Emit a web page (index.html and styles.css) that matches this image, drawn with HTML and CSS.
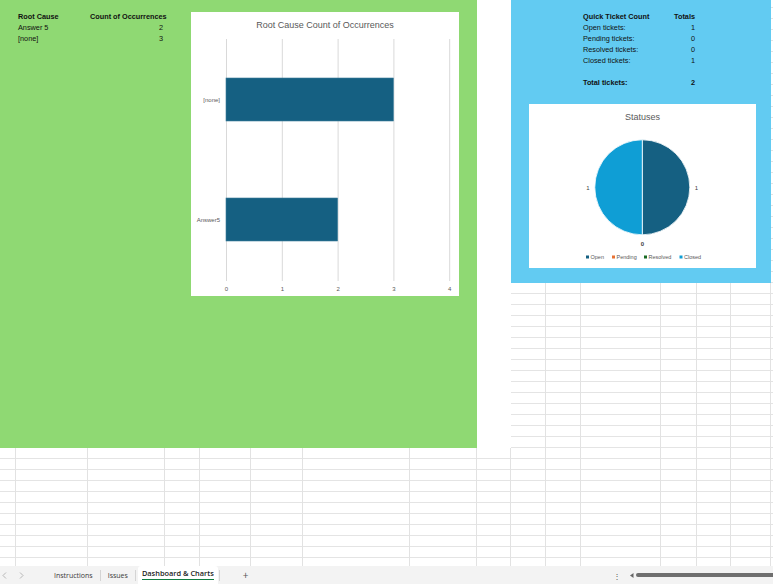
FILE: index.html
```html
<!DOCTYPE html>
<html lang="en">
<head>
    <meta charset="UTF-8">
    <meta name="viewport" content="width=device-width, initial-scale=1.0">
    <title>Ticket Tracker - Dashboard &amp; Charts</title>
    <link rel="stylesheet" href="styles.css">
</head>
<body>

    <div class="workbook">
        <div class="sheet">
            <!-- filled cell ranges -->
            <div class="fill fill-green"></div>
            <div class="fill fill-gap"></div>
            <div class="fill fill-blue"></div>

            <!-- root cause summary -->
            <div class="cell b c2 r2">Root Cause</div>
            <div class="cell b num c3 r2">Count of Occurrences</div>
            <div class="cell c2 r3">Answer 5</div>
            <div class="cell num c3 r3">2</div>
            <div class="cell c2 r4">[none]</div>
            <div class="cell num c3 r4">3</div>

            <!-- quick ticket count -->
            <div class="cell b c12 r2">Quick Ticket Count</div>
            <div class="cell b num c13 r2">Totals</div>
            <div class="cell c12 r3">Open tickets:</div>
            <div class="cell num c13 r3">1</div>
            <div class="cell c12 r4">Pending tickets:</div>
            <div class="cell num c13 r4">0</div>
            <div class="cell c12 r5">Resolved tickets:</div>
            <div class="cell num c13 r5">0</div>
            <div class="cell c12 r6">Closed tickets:</div>
            <div class="cell num c13 r6">1</div>
            <div class="cell b c12 r8">Total tickets:</div>
            <div class="cell b num c13 r8">2</div>

            <!-- bar chart -->
            <div class="chart chart-bar">
                <svg width="268" height="284" viewBox="0 0 268 284">
                    <text class="chart-title" x="134" y="16">Root Cause Count of Occurrences</text>
                    <g class="grid">
                        <line x1="35.5" y1="27" x2="35.5" y2="269"/>
                        <line x1="91.3" y1="27" x2="91.3" y2="269"/>
                        <line x1="147.1" y1="27" x2="147.1" y2="269"/>
                        <line x1="202.9" y1="27" x2="202.9" y2="269"/>
                        <line x1="258.7" y1="27" x2="258.7" y2="269"/>
                    </g>
                    <rect class="bar" x="35" y="66" width="167.4" height="43"/>
                    <rect class="bar" x="35" y="186" width="111.6" height="43"/>
                    <g class="axis-cat">
                        <text x="29" y="89.5">[none]</text>
                        <text x="29" y="209.5">Answer5</text>
                    </g>
                    <g class="axis-val">
                        <text x="35.5" y="278.5">0</text>
                        <text x="91.3" y="278.5">1</text>
                        <text x="147.1" y="278.5">2</text>
                        <text x="202.9" y="278.5">3</text>
                        <text x="258.7" y="278.5">4</text>
                    </g>
                </svg>
            </div>

            <!-- status pie -->
            <div class="chart chart-pie">
                <svg width="227" height="164" viewBox="0 0 227 164">
                    <text class="chart-title" x="113.5" y="16">Statuses</text>
                    <path class="slice" fill="#156082" d="M113.3 35.8 A47.5 47.5 0 0 1 113.3 130.8 Z"/>
                    <path class="slice" fill="#0f9ed5" d="M113.3 130.8 A47.5 47.5 0 0 1 113.3 35.8 Z"/>
                    <g class="pie-label">
                        <text x="59" y="85.5">1</text>
                        <text x="167.5" y="85.5">1</text>
                        <text class="zero" x="113.3" y="141.5">0</text>
                    </g>
                    <g class="legend">
                        <rect x="57" y="151.5" width="3" height="3" fill="#156082"/>
                        <text x="61.5" y="155">Open</text>
                        <rect x="83" y="151.5" width="3" height="3" fill="#e97132"/>
                        <text x="87.5" y="155">Pending</text>
                        <rect x="115" y="151.5" width="3" height="3" fill="#196b24"/>
                        <text x="119.5" y="155">Resolved</text>
                        <rect x="150.5" y="151.5" width="3" height="3" fill="#0f9ed5"/>
                        <text x="155" y="155">Closed</text>
                    </g>
                </svg>
            </div>
        </div>

        <div class="tabbar">
            <div class="nav">
                <svg width="5" height="7" viewBox="0 0 5 7"><path d="M4 0.5 L1 3.5 L4 6.5"/></svg>
                <svg width="5" height="7" viewBox="0 0 5 7"><path d="M1 0.5 L4 3.5 L1 6.5"/></svg>
            </div>
            <div class="tab">Instructions</div>
            <div class="tab-sep"></div>
            <div class="tab">Issues</div>
            <div class="tab-sep"></div>
            <div class="tab active"><span>Dashboard &amp; Charts</span></div>
            <div class="tab-sep"></div>
            <div class="add-sheet">+</div>

            <div class="scroll">
                <span class="more">&#8942;</span>
                <svg class="scroll-left" width="4" height="5" viewBox="0 0 4 5"><path d="M3.5 0 L0 2.5 L3.5 5 Z"/></svg>
                <div class="thumb"></div>
            </div>
        </div>
    </div>

</body>
</html>
```

FILE: styles.css
```css
* {
    box-sizing: border-box;
}
body {
    margin: 0;
    background: #ffffff;
    font-family: "Liberation Sans", Arial, sans-serif;
    color: #000;
}
.workbook {
    width: 773px;
    height: 584px;
    overflow: hidden;
}

/* sheet grid: column widths follow the workbook's columns */
.sheet {
    position: relative;
    height: 566px;
    overflow: hidden;
    display: grid;
    grid-template-columns: 16px 72px 77px 35px 51px 52px 107px 67px 34px 35px 35px 80px 36px 34px 40px 2px;
    grid-template-rows: 8px repeat(51, 11px);
    background-color: #ffffff;
    background-image:
        linear-gradient(to right,
            transparent 15px, #e2e2e2 15px 16px,
            transparent 16px 87px, #e2e2e2 87px 88px,
            transparent 88px 164px, #e2e2e2 164px 165px,
            transparent 165px 199px, #e2e2e2 199px 200px,
            transparent 200px 250px, #e2e2e2 250px 251px,
            transparent 251px 302px, #e2e2e2 302px 303px,
            transparent 303px 409px, #e2e2e2 409px 410px,
            transparent 410px 476px, #e2e2e2 476px 477px,
            transparent 477px 510px, #e2e2e2 510px 511px,
            transparent 511px 545px, #e2e2e2 545px 546px,
            transparent 546px 580px, #e2e2e2 580px 581px,
            transparent 581px 660px, #e2e2e2 660px 661px,
            transparent 661px 696px, #e2e2e2 696px 697px,
            transparent 697px 730px, #e2e2e2 730px 731px,
            transparent 731px 770px, #e2e2e2 770px 771px,
            transparent 771px),
        linear-gradient(to bottom, transparent 10px, #e4e4e4 10px);
    background-size: 100% 100%, 100% 11px;
    background-position: 0 0, 0 8px;
    background-repeat: no-repeat, repeat-y;
}

.fill {
    grid-row: 1 / 42;
}
.fill-green {
    grid-column: 1 / 9;
    background: #8fd973;
}
.fill-gap {
    grid-column: 9 / 10;
    background: #ffffff;
}
.fill-blue {
    grid-column: 10 / 16;
    grid-row: 1 / 27;
    background: #62cbf2;
}

/* cells sit on the bottom edge of their row, as in the sheet */
.cell {
    align-self: end;
    padding: 0 2px;
    margin-bottom: -2px;
    font-size: 7.3px;
    line-height: 8px;
    white-space: nowrap;
    color: #111;
}
.cell.b {
    font-weight: bold;
}
.cell.num {
    text-align: right;
}
.c2 { grid-column: 2; }
.c3 { grid-column: 3; }
.c12 { grid-column: 12; }
.c13 { grid-column: 13; }
.r2 { grid-row: 2; }
.r3 { grid-row: 3; }
.r4 { grid-row: 4; }
.r5 { grid-row: 5; }
.r6 { grid-row: 6; }
.r8 { grid-row: 8; }

/* floating charts */
.chart {
    position: absolute;
    background: #ffffff;
}
.chart svg {
    display: block;
    font-family: "Liberation Sans", Arial, sans-serif;
}
.chart-bar {
    left: 191px;
    top: 12px;
    width: 268px;
    height: 284px;
}
.chart-pie {
    left: 529px;
    top: 104px;
    width: 227px;
    height: 164px;
}
.chart-title {
    font-size: 9px;
    fill: #595959;
    text-anchor: middle;
}
.grid line {
    stroke: #d9d9d9;
    stroke-width: 1;
}
.bar {
    fill: #156082;
    stroke: #3c7c99;
    stroke-width: 0.6;
}
.axis-cat text {
    font-size: 6px;
    fill: #595959;
    text-anchor: end;
}
.axis-val text {
    font-size: 6px;
    fill: #595959;
    text-anchor: middle;
}
.slice {
    stroke: #ffffff;
    stroke-width: 0.8;
}
.pie-label text {
    font-size: 6px;
    fill: #404040;
    text-anchor: middle;
}
.pie-label .zero {
    font-weight: bold;
}
.legend text {
    font-size: 5.5px;
    fill: #595959;
}

/* sheet tabs */
.tabbar {
    height: 18px;
    display: flex;
    align-items: stretch;
    background: #f3f3f3;
    font-family: "Open Sans", "Noto Sans", sans-serif;
    font-size: 7px;
    color: #3a3a3a;
}
.nav {
    width: 47px;
    display: flex;
    align-items: center;
    gap: 12px;
    padding-left: 2px;
}
.nav path {
    fill: none;
    stroke: #a6a6a6;
    stroke-width: 0.8;
}
.tab {
    display: flex;
    align-items: center;
    padding: 1px 7px 0;
}
.tab-sep {
    width: 1px;
    margin: 4px 0 3px;
    background: #d4d4d4;
}
.tab.active {
    padding: 0 4px;
    margin: 0 1px 0 2px;
    background: #ffffff;
    border-radius: 3px 3px 0 0;
    font-weight: 600;
    font-size: 7.4px;
    color: #222;
    align-items: flex-start;
}
.tab.active span {
    margin-top: 3px;
    padding-bottom: 1px;
    border-bottom: 1.2px solid #107c41;
    line-height: 9px;
}
.add-sheet {
    display: flex;
    align-items: center;
    margin-left: 23px;
    font-size: 10px;
    color: #555;
}
.scroll {
    margin-left: auto;
    width: 161px;
    display: flex;
    align-items: center;
}
.more {
    font-size: 8px;
    color: #555;
    margin-left: 1px;
}
.scroll-left {
    margin-left: 9px;
    fill: #666;
}
.thumb {
    flex: 1;
    height: 3.5px;
    margin-left: 2px;
    background: #6f6f6f;
    border-radius: 2px 0 0 2px;
}
```
